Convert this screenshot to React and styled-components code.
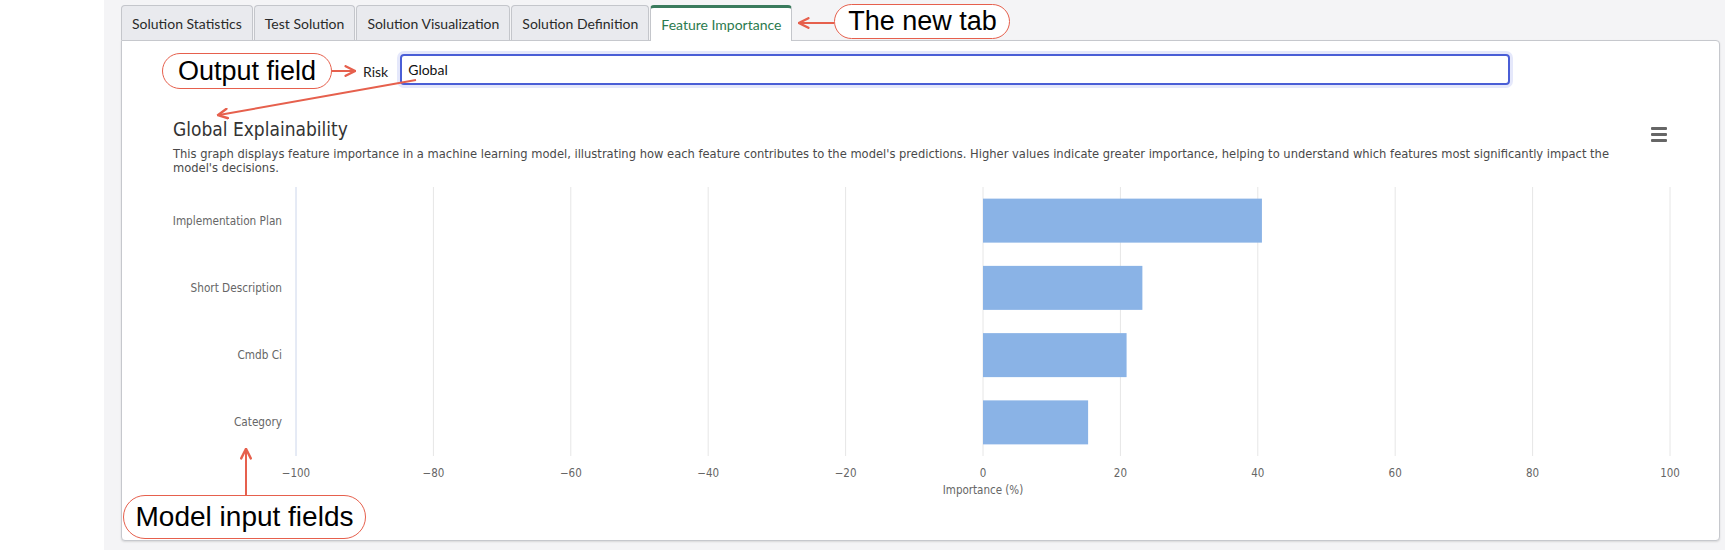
import React from 'react';
import styled, { createGlobalStyle } from 'styled-components';

const GlobalStyle = createGlobalStyle`
  html, body {
    margin: 0;
    padding: 0;
    background: #ffffff;
  }
  body {
    font-family: Lato, "Liberation Sans", sans-serif;
  }
`;

const NOTE_RED = '#e6604d';
const CHART_FONT = '"DejaVu Sans Condensed", "DejaVu Sans", sans-serif';

const Page = styled.div`
  display: flex;
  width: 1725px;
  height: 550px;
  overflow: hidden;
`;

const Gutter = styled.div`
  width: 104px;
  flex-shrink: 0;
  background: #ffffff;
`;

const Workspace = styled.div`
  flex: 1;
  display: flex;
  flex-direction: column;
  background: #f4f4f6;
  padding: 4px 5px 9px 17px;
`;

const TabBar = styled.div`
  display: flex;
  align-items: flex-end;
  height: 36px;
  position: relative;
  z-index: 2;
`;

const Tab = styled.div`
  display: flex;
  align-items: center;
  padding: 0 10px;
  margin-right: 1px;
  box-sizing: border-box;
  border: 1px solid #c4c6cb;
  border-bottom: none;
  border-radius: 4px 4px 0 0;
  font-size: 14px;
  font-weight: 400;
  color: ${({ $active }) => ($active ? '#2b7a4e' : '#2a2a2a')};
  background: ${({ $active }) => ($active ? '#ffffff' : '#e9eaee')};
  border-top: ${({ $active }) => ($active ? '3px solid #3a7b5d' : '1px solid #c4c6cb')};
  height: ${({ $active }) => ($active ? '36px' : '35px')};
  margin-bottom: ${({ $active }) => ($active ? '-1px' : '0')};
`;

const Callout = styled.div`
  display: inline-flex;
  align-items: center;
  justify-content: center;
  box-sizing: border-box;
  height: ${({ $h }) => $h}px;
  width: ${({ $w }) => $w}px;
  border: 1.5px solid ${NOTE_RED};
  border-radius: 22px;
  background: #ffffff;
  font-family: "Liberation Sans", Arial, sans-serif;
  font-size: ${({ $size }) => $size || 27}px;
  color: #000000;
  white-space: nowrap;
  flex-shrink: 0;
`;

const ArrowSvg = styled.svg`
  display: block;
  flex-shrink: 0;
  overflow: visible;
`;

const Panel = styled.div`
  flex: 1;
  position: relative;
  display: flex;
  flex-direction: column;
  background: #ffffff;
  border: 1px solid #c6c8cd;
  border-radius: 0 4px 4px 4px;
  box-shadow: 0 1px 2px rgba(0, 0, 0, 0.12);
  padding-top: 12px;
`;

const OutputRow = styled.div`
  display: flex;
  align-items: center;
  padding-left: 40px;
  height: 36px;
`;

const FieldLabel = styled.span`
  font-size: 14px;
  color: #222;
  margin: 0 12px 0 0;
`;

const FieldInput = styled.div`
  width: 1110px;
  height: 31px;
  box-sizing: border-box;
  border: 2px solid #4a5ed6;
  border-radius: 4px;
  box-shadow: 0 0 0 3px #e5e8fb;
  display: flex;
  align-items: center;
  padding-left: 6px;
  font-size: 14px;
  color: #111;
  margin-top: -3px;
`;

const ChartBlock = styled.div`
  margin: 29px 0 0 38px;
  width: 1530px;
  font-family: ${CHART_FONT};
`;

const ChartHeader = styled.div`
  display: flex;
  justify-content: space-between;
  align-items: flex-start;
  padding: 0 23px 0 13px;
`;

const ChartTitle = styled.div`
  font-size: 19px;
  line-height: 22px;
  color: #333333;
`;

const ChartDesc = styled.div`
  margin-top: 7px;
  font-size: 12.8px;
  line-height: 14px;
  color: #4a4a4a;
  white-space: nowrap;
`;

const MenuButton = styled.div`
  margin-top: 9px;
  width: 16px;
  display: flex;
  flex-direction: column;
  gap: 3px;
  span {
    display: block;
    height: 3px;
    background: #666666;
    border-radius: 1px;
  }
`;

const ChartSvg = styled.svg`
  display: block;
  margin-top: 5px;
  font-family: ${CHART_FONT};
`;

const Overlay = styled.div`
  position: absolute;
  left: ${({ $x }) => $x}px;
  top: ${({ $y }) => ($y === undefined ? 'auto' : `${$y}px`)};
  bottom: ${({ $b }) => ($b === undefined ? 'auto' : `${$b}px`)};
  z-index: 5;
`;

const Arrow = ({ id, w, h, x1, y1, x2, y2 }) => (
  <ArrowSvg width={w} height={h} viewBox={`0 0 ${w} ${h}`}>
    <defs>
      <marker id={id} viewBox="0 0 10 10" refX="8" refY="5" markerWidth="6" markerHeight="6" orient="auto">
        <path d="M1 1 L9 5 L1 9" fill="none" stroke={NOTE_RED} strokeWidth="2" strokeLinecap="round" strokeLinejoin="round" />
      </marker>
    </defs>
    <line x1={x1} y1={y1} x2={x2} y2={y2} stroke={NOTE_RED} strokeWidth="2" markerEnd={`url(#${id})`} />
  </ArrowSvg>
);

const tabs = ['Solution Statistics', 'Test Solution', 'Solution Visualization', 'Solution Definition', 'Feature Importance'];

const features = [
  { name: 'Implementation Plan', value: 40.6 },
  { name: 'Short Description', value: 23.2 },
  { name: 'Cmdb Ci', value: 20.9 },
  { name: 'Category', value: 15.3 },
];

const ticks = [-100, -80, -60, -40, -20, 0, 20, 40, 60, 80, 100];

const PLOT_LEFT = 136;
const PLOT_TOP = 7;
const PLOT_W = 1374;
const PLOT_H = 269;
const xOf = (v) => PLOT_LEFT + ((v + 100) / 200) * PLOT_W;
const ROW = PLOT_H / features.length;

const ImportanceChart = () => (
  <ChartSvg width="1530" height="320" viewBox="0 0 1530 320">
    {ticks.map((t, i) => (
      <line
        key={t}
        x1={xOf(t)}
        x2={xOf(t)}
        y1={PLOT_TOP}
        y2={PLOT_TOP + PLOT_H}
        stroke={i === 0 ? '#ccd6eb' : '#e6e6e6'}
        strokeWidth="1"
      />
    ))}
    {features.map((f, i) => {
      const cy = PLOT_TOP + ROW * (i + 0.5);
      return (
        <g key={f.name}>
          <rect x={xOf(0)} y={cy - 22} width={xOf(f.value) - xOf(0)} height="44" fill="#8ab3e6" />
          <text x="122" y={cy + 4} textAnchor="end" fontSize="11.7" fill="#666666">
            {f.name}
          </text>
        </g>
      );
    })}
    {ticks.map((t) => (
      <text key={t} x={xOf(t)} y="297" textAnchor="middle" fontSize="11.5" fill="#666666">
        {t < 0 ? `\u2212${Math.abs(t)}` : t}
      </text>
    ))}
    <text x={xOf(0)} y="314" textAnchor="middle" fontSize="11.5" fill="#666666">
      Importance (%)
    </text>
  </ChartSvg>
);

const App = () => (
  <>
    <GlobalStyle />
    <Page>
      <Gutter />
      <Workspace>
        <TabBar>
          {tabs.map((t) => (
            <Tab key={t} $active={t === 'Feature Importance'}>
              {t}
            </Tab>
          ))}
          <Arrow id="tabArrow" w={41} h={36} x1={41} y1={19} x2={7} y2={19} />
          <Callout $w={176} $h={35} style={{ marginBottom: 1 }}>
            The new tab
          </Callout>
        </TabBar>
        <Panel>
          <OutputRow>
            <Callout $w={170} $h={36}>
              Output field
            </Callout>
            <Arrow id="outArrow" w={31} h={12} x1={0} y1={6} x2={22} y2={6} />
            <FieldLabel>Risk</FieldLabel>
            <FieldInput>Global</FieldInput>
          </OutputRow>
          <ChartBlock>
            <ChartHeader>
              <div>
                <ChartTitle>Global Explainability</ChartTitle>
                <ChartDesc>
                  This graph displays feature importance in a machine learning model, illustrating how each feature
                  contributes to the model's predictions. Higher values indicate greater importance, helping to
                  understand which features most significantly impact the
                  <br />
                  model's decisions.
                </ChartDesc>
              </div>
              <MenuButton>
                <span />
                <span />
                <span />
              </MenuButton>
            </ChartHeader>
            <ImportanceChart />
          </ChartBlock>
          <Overlay $x={80} $y={30}>
            <Arrow id="globalArrow" w={260} h={90} x1={214} y1={9} x2={17} y2={44} />
          </Overlay>
          <Overlay $x={118} $y={405}>
            <Arrow id="inputArrow" w={12} h={50} x1={6} y1={49} x2={6} y2={4} />
          </Overlay>
          <Overlay $x={1} $b={1}>
            <Callout $w={243} $h={44} $size={28}>
              Model input fields
            </Callout>
          </Overlay>
        </Panel>
      </Workspace>
    </Page>
  </>
);

export default App;
